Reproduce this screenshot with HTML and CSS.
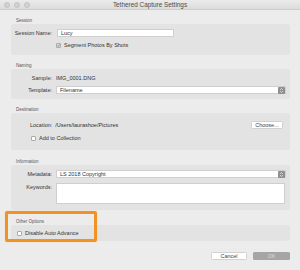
FILE: index.html
```html
<!DOCTYPE html>
<html>
<head>
<meta charset="utf-8">
<link rel="stylesheet" href="styles.css">
</head>
<body>
<div class="window">
  <div class="titlebar">
    <div class="lights"><span></span><span></span><span></span></div>
    <div class="title">Tethered Capture Settings</div>
    <div></div>
  </div>
  <div class="content">
    <div class="section">
      <div class="sec-label">Session</div>
      <div class="box form session">
        <div class="lbl">Session Name:</div>
        <div class="field short">Lucy</div>
        <div></div>
        <div class="check-row">
          <svg class="cb" viewBox="0 0 6 6"><rect x="0.5" y="0.5" width="5" height="5" rx="0.8" fill="#dcdcdc" stroke="#9c9c9c"/><path d="M1.5 3.1 L2.6 4.2 L4.6 1.6" fill="none" stroke="#6e6e6e" stroke-width="0.8"/></svg>
          <span>Segment Photos By Shots</span>
        </div>
      </div>
    </div>
    <div class="section">
      <div class="sec-label">Naming</div>
      <div class="box form naming">
        <div class="lbl">Sample:</div>
        <div class="value">IMG_0001.DNG</div>
        <div class="lbl">Template:</div>
        <div class="select"><span>Filename</span><span class="arrows"><svg viewBox="0 0 7 8"><path d="M2 3.2 L3.5 1.8 L5 3.2 M2 4.8 L3.5 6.2 L5 4.8" fill="none" stroke="#fff" stroke-width="0.8"/></svg></span></div>
      </div>
    </div>
    <div class="section">
      <div class="sec-label">Destination</div>
      <div class="box destination">
        <div class="loc-row">
          <span>Location:</span>
          <span class="path">/Users/laurashoe/Pictures</span>
          <span class="btn choose">Choose...</span>
        </div>
        <div class="check-row">
          <span class="cb empty"></span>
          <span>Add to Collection</span>
        </div>
      </div>
    </div>
    <div class="section gap9">
      <div class="sec-label">Information</div>
      <div class="box form information">
        <div class="lbl">Metadata:</div>
        <div class="select"><span>LS 2018 Copyright</span><span class="arrows"><svg viewBox="0 0 7 8"><path d="M2 3.2 L3.5 1.8 L5 3.2 M2 4.8 L3.5 6.2 L5 4.8" fill="none" stroke="#fff" stroke-width="0.8"/></svg></span></div>
        <div class="lbl top">Keywords:</div>
        <div class="textarea"></div>
      </div>
    </div>
    <div class="section gap9">
      <div class="sec-label">Other Options</div>
      <div class="box other">
        <div class="check-row">
          <span class="cb empty"></span>
          <span>Disable Auto Advance</span>
        </div>
      </div>
    </div>
  </div>
  <div class="buttons">
    <span class="btn cancel">Cancel</span>
    <span class="btn ok">OK</span>
  </div>
  <div class="highlight"></div>
</div>
</body>
</html>
```
FILE: styles.css
```css
html, body {
  margin: 0;
  padding: 0;
}
body {
  background: #ececec;
  font-family: "Liberation Sans", Arial, sans-serif;
  color: #333;
}
.window {
  position: relative;
  width: 300px;
  height: 270px;
  background: #ececec;
  overflow: hidden;
}
.titlebar {
  height: 10px;
  box-sizing: border-box;
  display: grid;
  grid-template-columns: 1fr auto 1fr;
  align-items: center;
  background: linear-gradient(#ebebeb, #dcdcdc);
  border-bottom: 1px solid #cdcdcd;
}
.lights {
  display: flex;
  gap: 4px;
  padding-left: 4px;
}
.lights span {
  width: 6px;
  height: 6px;
  border-radius: 50%;
  background: #d2d2d2;
  box-sizing: border-box;
  border: 0.5px solid #c4c4c4;
}
.title {
  font-size: 6.4px;
  line-height: 9px;
  color: #4d4d4d;
}
.content {
  padding: 8px 10px 0 11px;
}
.section {
  margin-top: 8px;
}
.section:first-child {
  margin-top: 0;
}
.section.gap9 {
  margin-top: 9px;
}
.sec-label {
  font-size: 4.5px;
  line-height: 6px;
  height: 6px;
  padding-left: 5px;
  color: #555;
}
.box {
  background: #e3e3e3;
  border-radius: 3px;
  box-sizing: border-box;
  font-size: 5.5px;
}
.form {
  display: grid;
  grid-template-columns: 42px 1fr;
  column-gap: 3px;
  align-items: center;
  padding-right: 4px;
}
.lbl {
  text-align: right;
  padding-right: 1px;
  line-height: 8px;
}
.lbl.top {
  align-self: start;
}
.value {
  line-height: 8px;
}
.session {
  height: 31px;
  padding-top: 5px;
  grid-template-rows: 8px 7px;
  row-gap: 5px;
}
.field {
  height: 8px;
  box-sizing: border-box;
  background: #fff;
  border: 0.5px solid #cfcfcf;
  line-height: 7px;
  padding-left: 3px;
  color: #333;
}
.field.short {
  width: 117px;
  margin-left: 1px;
}
.check-row {
  display: flex;
  align-items: center;
  gap: 3px;
  line-height: 7px;
}
.cb {
  width: 5px;
  height: 5px;
  flex: none;
}
.cb.empty {
  box-sizing: border-box;
  background: #fff;
  border: 0.5px solid #a9a9a9;
  border-radius: 1px;
}
.naming {
  height: 30px;
  padding-top: 5px;
  grid-template-rows: 8px 8px;
  row-gap: 4px;
}
.select {
  height: 8px;
  box-sizing: border-box;
  background: #fff;
  border: 0.5px solid #cfcfcf;
  display: flex;
  align-items: center;
  justify-content: space-between;
  padding-left: 3px;
  line-height: 7px;
}
.arrows {
  width: 7px;
  height: 7px;
  background: #8f8f8f;
  border-radius: 1px;
  display: flex;
}
.arrows svg {
  width: 7px;
  height: 7px;
}
.destination {
  height: 37px;
  padding: 8px 7px 0 19px;
  display: flex;
  flex-direction: column;
  gap: 6px;
}
.loc-row {
  display: flex;
  align-items: center;
  height: 8px;
  gap: 3px;
}
.loc-row .path {
  flex: 1;
}
.destination .check-row {
  padding-left: 1px;
  gap: 3px;
}
.btn {
  display: flex;
  align-items: center;
  justify-content: center;
  box-sizing: border-box;
  height: 8px;
  border-radius: 1.5px;
  font-size: 5.5px;
}
.choose {
  width: 32px;
  background: #fff;
  border: 0.5px solid #d0d0d0;
  color: #444;
}
.information {
  height: 45px;
  padding-top: 5px;
  grid-template-rows: 8px 21px;
  row-gap: 5px;
  align-content: start;
}
.textarea {
  height: 21px;
  box-sizing: border-box;
  background: #fff;
  border: 0.5px solid #cfcfcf;
  margin-right: 1px;
}
.other {
  height: 16px;
  padding-left: 6px;
  display: flex;
  align-items: center;
}
.other .check-row {
  gap: 3px;
}
.buttons {
  display: flex;
  justify-content: flex-end;
  gap: 6px;
  padding-right: 10px;
  margin-top: 11px;
}
.cancel {
  width: 36px;
  background: #fff;
  border: 0.5px solid #d2d2d2;
  color: #444;
}
.ok {
  width: 37px;
  background: #a5a5a5;
  color: #dadada;
}
.highlight {
  position: absolute;
  left: 5px;
  top: 211px;
  width: 92px;
  height: 31px;
  box-sizing: border-box;
  border: 3px solid #f39224;
  border-radius: 2px;
  box-shadow: 0 0 1px rgba(243, 146, 36, 0.6);
}
```
